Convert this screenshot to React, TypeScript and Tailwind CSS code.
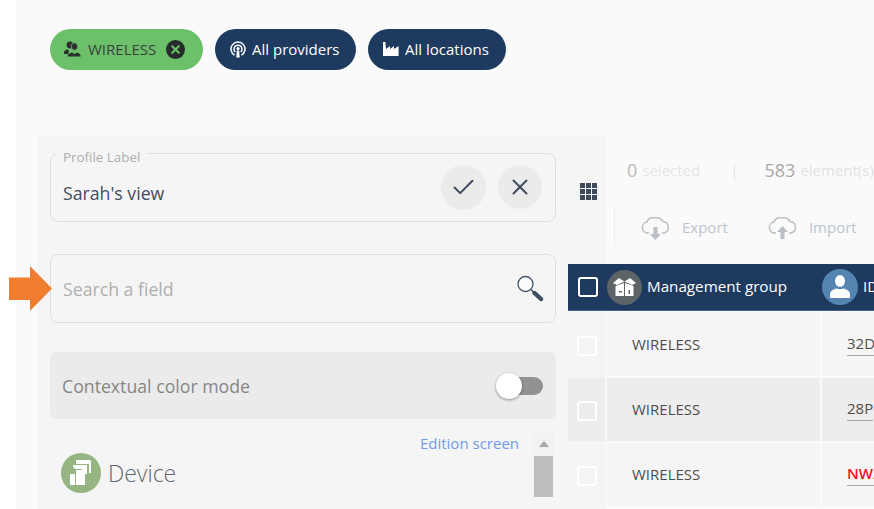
import { Check, X } from "lucide-react";

const navy = "bg-[#1e3a5f]";

function UsersIcon() {
  return (
    <svg width="17" height="16" viewBox="0 0 17 16" fill="#2b2f2d" className="shrink-0">
      <circle cx="6" cy="4" r="3.400" />
      <path d="M0 11.500c0-2 2-2.600 3.600-3.200L5 10l-.8 3H0z" />
      <ellipse cx="10.500" cy="5.500" rx="3.200" ry="3.800" stroke="#6cc06a" strokeWidth="0.800" />
      <path d="M3.600 15.500c0-2.600 2.600-3.400 4.600-4l2.300 1.500 2.300-1.500c2 .6 3.900 1.400 3.900 4z" />
    </svg>
  );
}

function ProviderIcon() {
  return (
    <svg width="16" height="17" viewBox="0 0 16 17" fill="none" stroke="white" className="shrink-0">
      <path d="M4.600 14.200A7 7 0 1 1 11.400 14.200" strokeWidth="1.500" />
      <path d="M5.200 11A4 4 0 1 1 10.800 11" strokeWidth="1.500" />
      <circle cx="8" cy="7.600" r="1.600" fill="white" stroke="none" />
      <path d="M6.800 9.500h2.400l.5 7H6.300z" fill="white" stroke="none" />
    </svg>
  );
}

function FactoryIcon() {
  return (
    <svg width="16" height="14" viewBox="0 0 16 14" fill="white" className="shrink-0">
      <path d="M0 0h2.400l.6 7 4-3v3l4-3v3l4.600-3v10H0z" />
    </svg>
  );
}

function GridIcon() {
  return (
    <div className="grid w-[17px] grid-cols-[5px_5px_5px] gap-[1px]">
      {Array.from({ length: 9 }).map((_, i) => (
        <div key={i} className="h-[5px] w-[5px] bg-[#3c4a5c]" />
      ))}
    </div>
  );
}

function MagnifierIcon() {
  return (
    <svg width="27" height="27" viewBox="0 0 27 27" fill="none">
      <circle cx="8.500" cy="9" r="7.500" stroke="#46566a" strokeWidth="1.300" fill="#fcfcfc" />
      <path d="M14 14.500l3 3" stroke="#46566a" strokeWidth="1.600" />
      <path d="M17.500 18l6.500 6" stroke="#3f4f63" strokeWidth="4.400" strokeLinecap="round" />
    </svg>
  );
}

function CloudIcon({ up }: { up?: boolean }) {
  return (
    <svg width="30" height="26" viewBox="0 0 30 26" fill="none">
      <path
        d="M8 18H6.500a5.500 5.500 0 0 1-.6-10.900 6 6 0 0 1 8-4.100 6.500 6.500 0 0 1 8.100 3.600 5.800 5.800 0 0 1 1 11.400H21"
        stroke="#b9bfc4"
        strokeWidth="1.500"
      />
      {up ? (
        <path d="M14.500 11l-5.500 6h3.500v7h4v-7H20z" fill="#b9bfc4" />
      ) : (
        <path d="M12.500 12h4v7H20l-5.500 6L9 19h3.500z" fill="#b9bfc4" />
      )}
    </svg>
  );
}

function BoxIcon() {
  return (
    <svg width="25" height="20" viewBox="0 0 25 20" fill="white">
      <path d="M1 6l6-5 5.500 3.500L18 1l6 5-4 2-7.500-3.500L5 8z" />
      <path d="M3.500 9l8.500-3v13H3.500zM13 6l8.500 3v10H13z" />
      <path d="M7 14h3v1.500H7zM16.500 13h1.500v4h-1.500z" fill="#5d6468" />
    </svg>
  );
}

function PersonIcon() {
  return (
    <svg width="24" height="28" viewBox="0 0 24 28" fill="white">
      <ellipse cx="12" cy="8" rx="5" ry="6" />
      <path d="M2 25v-4c0-3 4-5 6.500-5.500 2 1 5 1 7 0C18 16 22 18 22 21v4z" />
    </svg>
  );
}

function DeviceIcon() {
  return (
    <svg width="24" height="26" viewBox="0 0 24 26" fill="white">
      <path d="M7 0h14l1 1v12h-2V4H7z" />
      <path d="M4 5h14v9h-5V9H6L4 7z" />
      <path d="M7 10h9v15H7z" />
      <path d="M1 14h5v11H1z" />
    </svg>
  );
}

function Chip({ className, children }: { className: string; children: React.ReactNode }) {
  return (
    <div className={`flex h-[41px] items-center rounded-[21px] pb-[1px] ${className}`}>{children}</div>
  );
}

function Row({ shade, code, red, tall }: { shade?: boolean; code: string; red?: boolean; tall?: boolean }) {
  const bg = shade ? "bg-[#ededed]" : "bg-[#f5f5f5]";
  return (
    <div className={`flex gap-[2px] pb-[2px] ${tall ? "h-[66px]" : "h-[65px]"}`}>
      <div className={`flex w-[37px] shrink-0 items-center pl-[9px] pt-[3px] ${bg}`}>
        <div className="h-[20px] w-[20px] rounded-[3px] border-2 border-white" />
      </div>
      <div className={`flex w-[213px] shrink-0 items-center pl-[25px] text-[15px] text-[#4d4d4d] ${bg}`}>
        WIRELESS
      </div>
      <div className={`flex flex-1 items-center overflow-hidden pl-[25px] ${bg}`}>
        <span
          className={`border-b border-[#a8a8a8] pb-[2px] text-[15px] leading-[20px] ${
            red ? "font-semibold text-[#f0141e]" : "text-[#4d4d4d]"
          }`}
        >
          {code}
        </span>
      </div>
    </div>
  );
}

export default function App() {
  return (
    <div className="relative flex h-[509px] w-[874px] overflow-hidden bg-white font-['Open_Sans',sans-serif]">
      <div className="w-4 shrink-0" />

      <div className="flex min-w-0 flex-1 flex-col bg-[#fafafa]">
        {/* filtres */}
        <div className="flex h-[136px] shrink-0 items-start gap-3 pl-[34px] pt-[29px]">
          <Chip className="w-[153px] bg-[#6cc06a] pl-[14px] text-[#36433d]">
            <UsersIcon />
            <span className="ml-[7px] text-[15px]">WIRELESS</span>
            <span className="ml-[10px] flex h-[19px] w-[19px] items-center justify-center rounded-full bg-[#262b2b]">
              <X size={13} strokeWidth={4} color="#6cc06a" />
            </span>
          </Chip>
          <Chip className={`w-[141px] pl-[15px] text-white ${navy}`}>
            <ProviderIcon />
            <span className="ml-[6px] text-[15px] font-medium">All providers</span>
          </Chip>
          <Chip className={`w-[138px] pl-[15px] text-white ${navy}`}>
            <FactoryIcon />
            <span className="ml-[6px] text-[15px] font-medium">All locations</span>
          </Chip>
        </div>

        <div className="flex min-h-0 flex-1">
          {/* panneau */}
          <div className="ml-[21px] flex w-[569px] shrink-0 bg-[#f5f5f5] pl-[13px] pt-[17px]">
            <div className="w-[506px] shrink-0">
              <div className="relative flex h-[69px] items-center justify-between rounded-[8px] border border-[#dedede] pl-[12px] pr-[13px]">
                <span className="absolute -top-[5px] left-[5px] bg-[#f5f5f5] px-[7px] text-[13.400px] leading-[16px] text-[#adadad]">
                  Profile Label
                </span>
                <span className="mt-[12px] text-[17.700px] text-[#3f4d5f]">Sarah's view</span>
                <div className="flex gap-[12px]">
                  <div className="flex h-[45px] w-[45px] items-center justify-center rounded-full bg-[#ebebeb]">
                    <Check size={27} strokeWidth={1.800} color="#3f4d5f" />
                  </div>
                  <div className="flex h-[44px] w-[44px] items-center justify-center rounded-full bg-[#ebebeb]">
                    <X size={26} strokeWidth={1.800} color="#3f4d5f" />
                  </div>
                </div>
              </div>

              <div className="mt-[32px] flex h-[69px] items-center justify-between rounded-[8px] border border-[#dedede] pl-[12px] pr-[11px]">
                <span className="mt-[2px] text-[17.700px] text-[#aeaeae]">Search a field</span>
                <MagnifierIcon />
              </div>

              <div className="mt-[29px] flex h-[67px] items-center justify-between rounded-[6px] bg-[#ebebeb] pl-[12px] pr-[13px]">
                <span className="mt-[2px] text-[17.700px] text-[#868686]">Contextual color mode</span>
                <div className="relative h-[18px] w-[34px] rounded-full bg-[#929292]">
                  <div className="absolute -left-[13px] -top-[4px] h-[26px] w-[26px] rounded-full bg-white shadow-[0_1px_3px_rgba(0,0,0,0.4)]" />
                </div>
              </div>

              <div className="flex justify-between">
                <div className="flex min-w-0 flex-1 flex-col">
                  <div className="mt-[14px] pr-[14px] text-right text-[15px] leading-[20px] text-[#6f9be8]">
                    Edition screen
                  </div>
                  <div className="flex items-center pl-[11px]">
                    <div className="flex h-[40px] w-[40px] items-center justify-center rounded-full bg-[#95b682]">
                      <DeviceIcon />
                    </div>
                    <span className="ml-[7px] text-[23px] font-light text-[#5f6772]">Device</span>
                  </div>
                </div>
                <div className="mr-[2px] mt-[13px] flex w-[21px] shrink-0 flex-col items-center bg-[#f2f2f2]">
                  <div className="mt-[9px] h-0 w-0 border-x-[5px] border-b-[6px] border-x-transparent border-b-[#a8a8a8]" />
                  <div className="mt-[9px] h-[41px] w-[19px] bg-[#bdbdbd]" />
                </div>
              </div>
            </div>

            <div className="ml-[24px] pt-[30px]">
              <GridIcon />
            </div>
          </div>

          {/* tableau */}
          <div className="relative min-w-0 flex-1 bg-[#fafafa]">
            <div className="flex h-[128px] flex-col pt-[24px]">
              <div className="flex items-center pl-[21px] text-[15px] leading-[20px] whitespace-nowrap">
                <span className="text-[18px] text-[#b9b9b9]">0</span>
                <span className="ml-[5px] text-[15px] text-[#e6e6e6]">selected</span>
                <span className="ml-[30px] text-[#e0e0e0]">|</span>
                <span className="ml-[26px] text-[18px] text-[#a9a9a9]">583</span>
                <span className="ml-[5px] text-[15px] text-[#e2e2e2]">element(s)</span>
              </div>
              <div className="ml-[8px] mt-[28px] flex h-[39px] items-center whitespace-nowrap border-l border-[#ececec] pl-[26px] text-[15px] text-[#bcc5d0]">
                <CloudIcon />
                <span className="ml-[11px]">Export</span>
                <span className="ml-[40px]">
                  <CloudIcon up />
                </span>
                <span className="ml-[11px]">Import</span>
              </div>
            </div>
            <div className="-ml-[38px] w-[306px]">
              <div className={`flex h-[47px] items-center border-b border-[#3f5f85] whitespace-nowrap ${navy}`}>
                <div className="ml-[10px] h-[20px] w-[20px] shrink-0 rounded-[3px] border-2 border-white" />
                <div className="ml-[9px] flex h-[35px] w-[35px] shrink-0 items-center justify-center rounded-full bg-[#5d6468]">
                  <BoxIcon />
                </div>
                <span className="ml-[5px] pb-[2px] text-[15.200px] font-medium text-white">Management group</span>
                <div className="ml-[35px] flex h-[36px] w-[36px] shrink-0 items-center justify-center overflow-hidden rounded-full bg-[#5484b0]">
                  <PersonIcon />
                </div>
                <span className="ml-[5px] pb-[2px] text-[15.200px] font-medium text-white">ID</span>
              </div>
              <div className="mt-[1px]">
                <Row code="32D" tall />
                <Row code="28P" shade />
                <Row code="NW2" red />
                <div className="h-[2px]" />
              </div>
            </div>
          </div>
        </div>
      </div>

      {/* flèche */}
      <svg className="absolute left-[9px] top-[266px]" width="43" height="45" viewBox="0 0 43 45">
        <path d="M0 11.500h21V0l22 22.500L21 45V34H0z" fill="#f07d30" />
      </svg>
    </div>
  );
}
